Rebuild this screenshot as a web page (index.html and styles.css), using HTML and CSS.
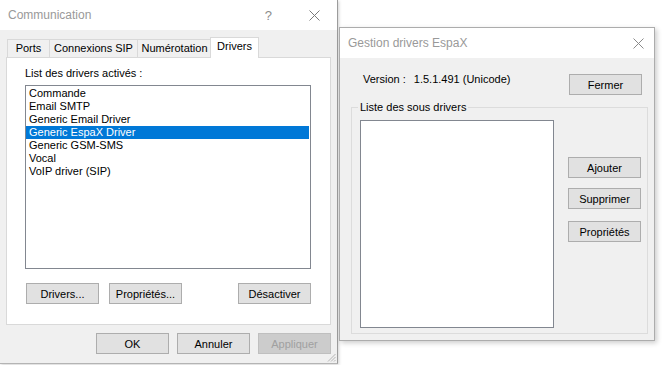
FILE: index.html
```html
<!DOCTYPE html>
<html lang="fr">
<head>
<meta charset="utf-8">
<title>Communication</title>
<link rel="stylesheet" href="styles.css">
</head>
<body>
<div class="desk">

  <!-- fenetre principale -->
  <div class="win win-main">
    <div class="titlebar">
      <span class="title">Communication</span>
      <span class="help">?</span>
      <svg class="close" width="11" height="11" viewBox="0 0 11 11"><path d="M0.5 0.5 L10.5 10.5 M10.5 0.5 L0.5 10.5" stroke="#7a7a7a" stroke-width="1" fill="none"/></svg>
    </div>
    <div class="client">
      <div class="tabs">
        <div class="tab t-ports">Ports</div>
        <div class="tab t-sip">Connexions SIP</div>
        <div class="tab t-num">Numérotation</div>
        <div class="tab t-drv active">Drivers</div>
      </div>
      <div class="panel">
        <div class="lbl">List des drivers activés :</div>
        <ul class="listbox drivers">
          <li>Commande</li>
          <li>Email SMTP</li>
          <li>Generic Email Driver</li>
          <li class="sel">Generic EspaX Driver</li>
          <li>Generic GSM-SMS</li>
          <li>Vocal</li>
          <li>VoIP driver (SIP)</li>
        </ul>
        <div class="panel-btns">
          <button class="btn">Drivers...</button>
          <button class="btn">Propriétés...</button>
          <button class="btn push-right">Désactiver</button>
        </div>
      </div>
      <div class="footer">
        <button class="btn">OK</button>
        <button class="btn">Annuler</button>
        <button class="btn" disabled>Appliquer</button>
      </div>
      <svg class="grip" width="9" height="9" viewBox="0 0 9 9"><path d="M8.5 1 L1 8.5 M8.5 4 L4 8.5 M8.5 7 L7 8.5" stroke="#b5b5b5" stroke-width="1" fill="none"/></svg>
    </div>
  </div>

  <!-- gestion drivers -->
  <div class="win win-espax">
    <div class="titlebar">
      <span class="title">Gestion drivers EspaX</span>
      <svg class="close" width="11" height="11" viewBox="0 0 11 11"><path d="M0.5 0.5 L10.5 10.5 M10.5 0.5 L0.5 10.5" stroke="#8a8a8a" stroke-width="1" fill="none"/></svg>
    </div>
    <div class="client">
      <div class="version-row">
        <div class="version"><span>Version :</span><span>1.5.1.491 (Unicode)</span></div>
        <button class="btn">Fermer</button>
      </div>
      <fieldset class="group">
        <legend>Liste des sous drivers</legend>
        <div class="group-body">
          <ul class="listbox subdrivers"></ul>
          <div class="side-btns">
            <button class="btn">Ajouter</button>
            <button class="btn">Supprimer</button>
            <button class="btn">Propriétés</button>
          </div>
        </div>
      </fieldset>
    </div>
  </div>

</div>
</body>
</html>
```

FILE: styles.css
```css
* { margin: 0; padding: 0; box-sizing: border-box; list-style: none; }
html, body { background: #fff; }
body { width: 666px; height: 365px; overflow: hidden; font-family: "Liberation Sans", Arial, sans-serif; font-size: 11px; color: #000; }
.desk { position: relative; width: 666px; height: 365px; }

/* fenetres */
.win { position: absolute; background: #f0f0f0; display: flex; flex-direction: column; }
.win-main { left: 0; top: 0; width: 338px; height: 364px; border-right: 1px solid #9c9c9c; border-bottom: 1px solid #b4b4b4; box-shadow: 1px 1px 3px rgba(0, 0, 0, .18); }
.win-espax { left: 339px; top: 27px; width: 316px; height: 314px; border: 1px solid #acacac; box-shadow: 2px 2px 5px rgba(0, 0, 0, .2); }

.titlebar { height: 30px; background: #fff; display: flex; align-items: center; flex: none; }
.title { font-size: 12px; color: #999; }
.win-main .title { padding-left: 8px; }
.win-main .help { margin-left: auto; font-size: 13px; color: #8c8c8c; margin-right: 37px; }
.win-main .close { margin-right: 17px; }
.win-espax .title { padding-left: 8px; }
.win-espax .close { margin-left: auto; margin-right: 10px; }

.client { flex: 1; position: relative; }

/* onglets */
.tabs { display: flex; align-items: flex-end; height: 20px; margin: 7px 0 0 7px; }
.tab { height: 18px; border: 1px solid #d9d9d9; border-bottom: none; margin-left: -1px; background: #f0f0f0; text-align: center; line-height: 17px; font-size: 11px; white-space: nowrap; }
.tab:first-child { margin-left: 0; }
.t-ports { width: 43px; }
.t-sip { width: 89px; }
.t-num { width: 75px; }
.t-drv { width: 49px; margin-left: -2px; }
.tab.active { height: 21px; margin-bottom: -1px; background: #fff; position: relative; z-index: 1; line-height: 17px; }

.panel { margin-left: 6px; width: 325px; height: 268px; background: #fff; border: 1px solid #d9d9d9; padding: 9px 0 0 18px; }
.lbl { line-height: 13px; }

.listbox { background: #fff; border: 1px solid #828790; }
.drivers { margin-top: 5px; width: 286px; height: 184px; padding: 1px 1px 0 0; }
.drivers li { height: 13px; line-height: 13px; padding-left: 3px; white-space: nowrap; }
.drivers li.sel { background: #0078d7; color: #fff; }

/* boutons */
.btn { height: 21px; width: 73px; background: #e1e1e1; border: 1px solid #adadad; font-family: "Liberation Sans", Arial, sans-serif; font-size: 11px; color: #000; text-align: center; }
.btn:disabled { background: #cccccc; border-color: #bfbfbf; color: #a0a0a0; }

.panel-btns { display: flex; gap: 10px; margin: 14px 0 0 1px; width: 285px; }
.push-right { margin-left: auto; }

.footer { display: flex; gap: 8px; margin: 8px 0 0 96px; }

.grip { position: absolute; right: 1px; bottom: 1px; }

/* gestion drivers */
.version-row { display: flex; align-items: flex-start; margin-top: 16px; padding: 0 12px 0 23px; }
.version { display: flex; gap: 8px; line-height: 13px; margin-top: -1px; }
.version-row .btn { margin-left: auto; margin-left: auto; }

.group { margin: 6px 6px 0 11px; border: 1px solid #dcdcdc; padding: 6px 0 5px 8px; height: 233px; }
.group legend { padding: 0 2px; margin-left: -2px; line-height: 13px; }
.group-body { display: flex; }
.subdrivers { width: 194px; height: 208px; }
.side-btns { display: flex; flex-direction: column; margin: 37px 0 0 14px; }
.side-btns .btn { margin-bottom: 10px; }
.side-btns .btn:last-child { margin-top: 2px; }
```
